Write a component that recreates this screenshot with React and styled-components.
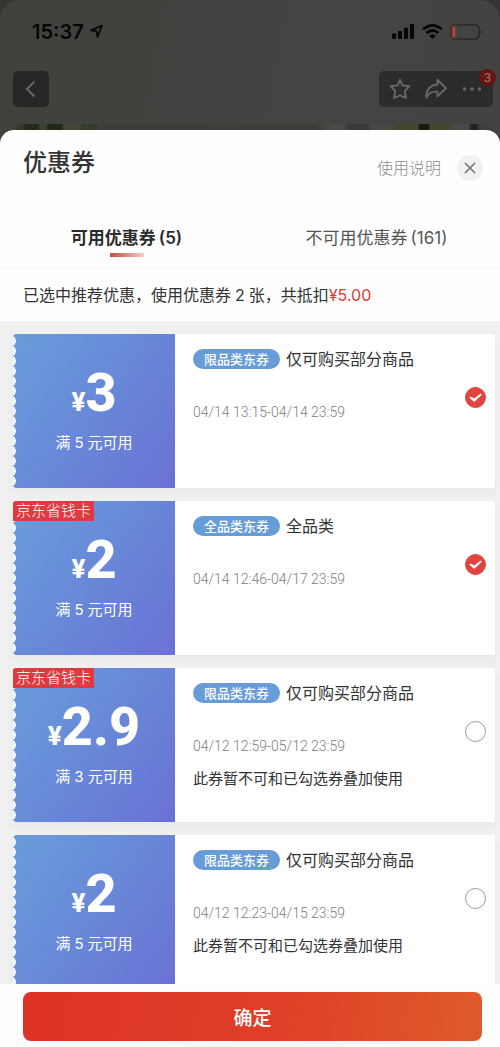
import React, { useState } from 'react';
import styled, { createGlobalStyle } from 'styled-components';

const GlobalStyle = createGlobalStyle`
  * {
    box-sizing: border-box;
  }
  body {
    margin: 0;
    background-color: #343532;
    font-family: Inter, "Noto Sans CJK SC", sans-serif;
    color: #333;
  }
  button, input {
    font-family: inherit;
    margin: 0;
  }
`;

const couponData = [
  { id: 1, amount: '3', limit: '5', type: '限品类东券', title: '仅可购买部分商品', time: '04/14 13:15-04/14 23:59' },
  { id: 2, amount: '2', limit: '5', type: '全品类东券', title: '全品类', time: '04/14 12:46-04/17 23:59', tag: '京东省钱卡' },
  { id: 3, amount: '2.9', limit: '3', type: '限品类东券', title: '仅可购买部分商品', time: '04/12 12:59-05/12 23:59', tag: '京东省钱卡', notice: '此券暂不可和已勾选券叠加使用' },
  { id: 4, amount: '2', limit: '5', type: '限品类东券', title: '仅可购买部分商品', time: '04/12 12:23-04/15 23:59', notice: '此券暂不可和已勾选券叠加使用' },
];

const Screen = styled.div`
  display: flex;
  flex-direction: column;
  height: 100vh;
  border-radius: 20px 20px 0 0;
  background: linear-gradient(100deg, #3f413b 0%, #444443 50%, #41413f 100%);
  overflow: hidden;
`;
const StatusBar = styled.div`
  display: flex;
  align-items: center;
  justify-content: space-between;
  height: 63px;
  padding: 0 17px 0 32px;
  color: #060606;
`;
const StatusGroup = styled.div`
  display: flex;
  align-items: center;
  gap: ${(props) => props.$gap}px;
`;
const Time = styled.span`
  font-size: 20px;
  font-weight: 600;
  line-height: 24px;
`;
const NavBar = styled.div`
  display: flex;
  justify-content: space-between;
  padding: 8px 7px 17px 13px;
`;
const NavButton = styled.button`
  display: flex;
  align-items: center;
  justify-content: center;
  width: 36px;
  height: 36px;
  padding: 0;
  border: none;
  border-radius: 5px;
  background-color: ${(props) => (props.$plain ? 'transparent' : '#272725')};
  color: #676765;
`;
const NavActions = styled.div`
  position: relative;
  display: flex;
  padding: 0 3px;
  border-radius: 5px;
  background-color: #2c2c2b;
`;
const NavBadge = styled.span`
  position: absolute;
  top: -2px;
  right: -3px;
  width: 17px;
  height: 17px;
  border-radius: 50%;
  background-color: #67150f;
  color: #a27f7c;
  font-size: 12px;
  line-height: 17px;
  text-align: center;
`;
const PhotoStrip = styled.div`
  flex: none;
  height: 20px;
  margin: 0 8px -14px 16px;
  border-radius: 8px 8px 0 0;
  background: linear-gradient(
    90deg,
    #34382c 0 8px, #232b1d 9px 22px, #3b422f 24px 30px, #20281a 32px 46px,
    #424838 48px 62px, #353d2b 66px 80px, #3d3e39 84px 300px, #4a4a47 316px 328px,
    #3a3a38 332px 352px, #484845 356px 374px, #44452f 380px 402px, #171812 404px 412px,
    #44452f 414px 434px, #494946 436px 452px, #20201f 456px 460px, #3e3e3c 464px
  );
`;

const Sheet = styled.main`
  flex: 1;
  min-height: 0;
  display: flex;
  flex-direction: column;
  border-radius: 14px 14px 0 0;
  background-color: #fefefe;
  overflow: hidden;
`;
const SheetHeader = styled.header`
  display: flex;
  align-items: flex-start;
  justify-content: space-between;
  height: 76px;
  padding: 17px 17px 0 23px;
`;
const SheetTitle = styled.h1`
  margin: 0;
  font-size: 24px;
  font-weight: 500;
  line-height: 32px;
`;
const HeaderTools = styled.div`
  display: flex;
  align-items: center;
  gap: 16px;
  padding-top: 8px;
`;
const HelpLink = styled.a`
  color: #8c8c8c;
  font-size: 16px;
  font-weight: 300;
  line-height: 24px;
  text-decoration: none;
`;
const CloseButton = styled.button`
  display: flex;
  align-items: center;
  justify-content: center;
  width: 26px;
  height: 26px;
  padding: 0;
  border: none;
  border-radius: 50%;
  background-color: #f1f1f1;
  color: #777;
`;
const Tabs = styled.div`
  display: flex;
  border-bottom: 1px solid #f4f4f4;
`;
const Tab = styled.button`
  flex: 1;
  display: flex;
  flex-direction: column;
  align-items: center;
  gap: 3px;
  height: 62px;
  padding: 20px 0 0 3px;
  border: none;
  background: none;
  color: ${(props) => (props.$active ? '#2b2b2b' : '#555')};
  font-size: 17px;
  font-weight: ${(props) => (props.$active ? 600 : 400)};
  line-height: 24px;

  &::after {
    content: '';
    width: 34px;
    height: 4px;
    background: ${(props) => (props.$active ? 'linear-gradient(90deg, #c94a41, #f3cdc9)' : 'none')};
  }
`;
const TabCount = styled.span`
  margin-left: 3px;
`;
const Summary = styled.p`
  margin: 0;
  padding: 14px 23px;
  font-size: 16px;
  line-height: 24px;
`;
const Discount = styled.span`
  color: #d6402f;
`;

const CouponList = styled.ul`
  flex: 1;
  min-height: 0;
  display: flex;
  flex-direction: column;
  gap: 13px;
  margin: 0;
  padding: 13px 5px 13px 13px;
  background-color: #f0f0f0;
  list-style: none;
  overflow-y: auto;
  scrollbar-width: none;
`;
const Card = styled.li`
  flex: none;
  display: flex;
  min-height: 154px;
  border-radius: 2px;
  background-color: #fff;
  box-shadow: 0 5px 8px rgba(0, 0, 0, 0.03);
`;
const Ticket = styled.div`
  position: relative;
  flex: none;
  display: flex;
  flex-direction: column;
  align-items: center;
  width: 162px;
  padding-top: 31px;
  background:
    radial-gradient(ellipse 3px 5px at 0 50%, #f1f4f8 85%, transparent) 0 2px / 6px 10px repeat-y,
    linear-gradient(125deg, #699ddb 0%, #6888d8 50%, #6a71d5 100%);
  color: #fff;
`;
const TicketTag = styled.span`
  position: absolute;
  top: 0;
  left: 0;
  padding: 0 3px;
  border-radius: 3px 0 0 0;
  background-color: #df3a40;
  font-size: 15px;
  font-weight: 300;
  line-height: 20px;
`;
const Price = styled.div`
  display: flex;
  align-items: baseline;
  font-family: Roboto, "Noto Sans CJK SC", sans-serif;
  font-size: 54px;
  font-weight: 800;
  line-height: 56px;
`;
const Yen = styled.span`
  font-size: 26px;
`;
const Limit = styled.div`
  margin-top: 1px;
  font-size: 15px;
  line-height: 24px;
`;
const LimitNumber = styled.span`
  margin: 0 4px;
`;
const Info = styled.div`
  flex: 1;
  padding: 13px 0 12px 18px;
`;
const InfoTitle = styled.label`
  display: flex;
  align-items: center;
  gap: 6px;
  font-size: 16px;
  line-height: 24px;
`;
const TypeBadge = styled.span`
  padding: 0 11px;
  border-radius: 10px;
  background-color: #679cd9;
  color: #fff;
  font-size: 13px;
  font-weight: 500;
  line-height: 20px;
`;
const ValidTime = styled.div`
  margin-top: 29px;
  color: #808080;
  font-family: Roboto, sans-serif;
  font-size: 14px;
  font-weight: 300;
  line-height: 24px;
`;
const Notice = styled.div`
  margin-top: 9px;
  font-size: 15px;
  line-height: 24px;
`;
const CheckWrap = styled.div`
  display: grid;
  align-self: flex-start;
  margin: 53px 9px 0 0;

  > * {
    grid-area: 1 / 1;
  }
  svg {
    pointer-events: none;
  }
`;
const CheckInput = styled.input`
  appearance: none;
  width: 21px;
  height: 21px;
  border: 1px solid ${(props) => (props.checked ? '#e0443f' : '#999')};
  border-radius: 50%;
  background-color: ${(props) => (props.checked ? '#e0443f' : '#fff')};
`;

const Footer = styled.footer`
  padding: 8px 18px 6px 23px;
`;
const ConfirmButton = styled.button`
  display: block;
  width: 100%;
  height: 49px;
  padding: 0;
  border: none;
  border-radius: 8px;
  background: linear-gradient(100deg, #de3226 0%, #df3f27 55%, #de5b2b 100%);
  color: #fff;
  font-size: 19px;
  font-weight: 500;
`;

const CouponCard = (props) => {
  const { coupon, checked, onToggle } = props;
  const inputId = `coupon-${coupon.id}`;
  return (
    <Card>
      <Ticket>
        {coupon.tag && <TicketTag>{coupon.tag}</TicketTag>}
        <Price>
          <Yen>¥</Yen>
          {coupon.amount}
        </Price>
        <Limit>
          满<LimitNumber>{coupon.limit}</LimitNumber>元可用
        </Limit>
      </Ticket>
      <Info>
        <InfoTitle htmlFor={inputId}>
          <TypeBadge>{coupon.type}</TypeBadge>
          {coupon.title}
        </InfoTitle>
        <ValidTime>{coupon.time}</ValidTime>
        {coupon.notice && <Notice>{coupon.notice}</Notice>}
      </Info>
      <CheckWrap>
        <CheckInput id={inputId} type="checkbox" checked={checked} onChange={() => onToggle(coupon.id)} />
        {checked && (
          <svg width="21" height="21" viewBox="0 0 21 21" fill="#fff">
            <path d="M4.2 10.6 Q5.2 9.4 6.6 10 L9.2 11.4 L15.4 6.8 Q16.8 6.4 16.7 7.8 L10 14.3 Q9.2 14.9 8.4 14.2 Z" />
          </svg>
        )}
      </CheckWrap>
    </Card>
  );
};

const App = () => {
  const [tab, setTab] = useState('usable');
  const [selected, setSelected] = useState([1, 2]);

  const onToggle = (id) => {
    setSelected(selected.includes(id) ? selected.filter((item) => item !== id) : [...selected, id]);
  };

  return (
    <>
      <GlobalStyle />
      <Screen>
        <StatusBar>
          <StatusGroup $gap={5}>
            <Time>15:37</Time>
            <svg width="15" height="15" viewBox="0 0 15 15" fill="none" stroke="currentColor" strokeWidth="1.8" strokeLinejoin="round">
              <path d="M13 1.6 L1.8 6.4 L7.6 7.2 L8.6 13 Z" />
            </svg>
          </StatusGroup>
          <StatusGroup $gap={7}>
            <svg width="23" height="15" viewBox="0 0 23 15" fill="currentColor">
              <rect x="0" y="9.5" width="4" height="5.5" rx="1" />
              <rect x="6" y="7" width="4" height="8" rx="1" />
              <rect x="12" y="3.8" width="4" height="11.2" rx="1" />
              <rect x="18" y="0" width="4" height="15" rx="1" />
            </svg>
            <svg width="21" height="15" viewBox="0 0 21 15" fill="none" stroke="currentColor" strokeWidth="2.8">
              <path d="M1.2 5.3 Q10.5 -2.6 19.8 5.3" />
              <path d="M4.6 9 Q10.5 4 16.4 9" />
              <path d="M10.5 15 L7.2 11.8 Q10.5 9.2 13.8 11.8 Z" fill="currentColor" stroke="none" />
            </svg>
            <svg width="33" height="16" viewBox="0 0 33 16" fill="none">
              <rect x="0.8" y="0.8" width="28.4" height="14.4" rx="4" stroke="#242424" strokeWidth="1.2" />
              <path d="M8 0.8 H4.8 Q0.8 0.8 0.8 4.8 V11.2 Q0.8 15.2 4.8 15.2 H8" stroke="#63332f" strokeWidth="1" />
              <rect x="2.6" y="2.8" width="2.6" height="10.4" rx="1" fill="#b54b46" />
              <path d="M31 5.4 Q34 8 31 10.6 Z" fill="#242424" />
            </svg>
          </StatusGroup>
        </StatusBar>

        <NavBar>
          <NavButton aria-label="返回">
            <svg width="18" height="18" viewBox="0 0 18 18" fill="none" stroke="currentColor" strokeWidth="2">
              <path d="M12.5 1.5 L5 9 L12.5 16.5" />
            </svg>
          </NavButton>
          <NavActions>
            <NavButton $plain aria-label="收藏">
              <svg width="22" height="22" viewBox="0 0 22 22" fill="none" stroke="currentColor" strokeWidth="1.9" strokeLinejoin="round">
                <path d="M11 1.6 L13.5 7.4 L20.3 8.2 L15.8 13 L16.9 20 L11 17.4 L5.1 20 L6.2 13 L1.7 8.2 L8.5 7.4 Z" />
              </svg>
            </NavButton>
            <NavButton $plain aria-label="分享">
              <svg width="22" height="22" viewBox="0 0 22 22" fill="none" stroke="currentColor" strokeWidth="1.9" strokeLinejoin="round">
                <path d="M12.4 1.8 L21 10.2 L12.4 18.4 V13.8 Q5.4 12.6 1.4 19.4 Q1 7.4 12.4 6.6 Z" />
              </svg>
            </NavButton>
            <NavButton $plain aria-label="更多">
              <svg width="20" height="4" viewBox="0 0 20 4" fill="currentColor">
                <circle cx="2.5" cy="2" r="1.7" />
                <circle cx="10" cy="2" r="1.7" />
                <circle cx="17.5" cy="2" r="1.7" />
              </svg>
            </NavButton>
            <NavBadge>3</NavBadge>
          </NavActions>
        </NavBar>
        <PhotoStrip />

        <Sheet>
          <SheetHeader>
            <SheetTitle>优惠券</SheetTitle>
            <HeaderTools>
              <HelpLink href="#help">使用说明</HelpLink>
              <CloseButton aria-label="关闭">
                <svg width="12" height="12" viewBox="0 0 12 12" fill="none" stroke="currentColor" strokeWidth="1.7">
                  <path d="M1 1 L11 11 M11 1 L1 11" />
                </svg>
              </CloseButton>
            </HeaderTools>
          </SheetHeader>
          <Tabs>
            <Tab $active={tab === 'usable'} onClick={() => setTab('usable')}>
              <span>可用优惠券<TabCount>(5)</TabCount></span>
            </Tab>
            <Tab $active={tab === 'unusable'} onClick={() => setTab('unusable')}>
              <span>不可用优惠券<TabCount>(161)</TabCount></span>
            </Tab>
          </Tabs>
          <Summary>
            已选中推荐优惠，使用优惠券<LimitNumber>2</LimitNumber>张，共抵扣<Discount>¥5.00</Discount>
          </Summary>
          <CouponList>
            {couponData.map((coupon) => (
              <CouponCard key={coupon.id} coupon={coupon} checked={selected.includes(coupon.id)} onToggle={onToggle} />
            ))}
          </CouponList>
          <Footer>
            <ConfirmButton>确定</ConfirmButton>
          </Footer>
        </Sheet>
      </Screen>
    </>
  );
};

export default App;
